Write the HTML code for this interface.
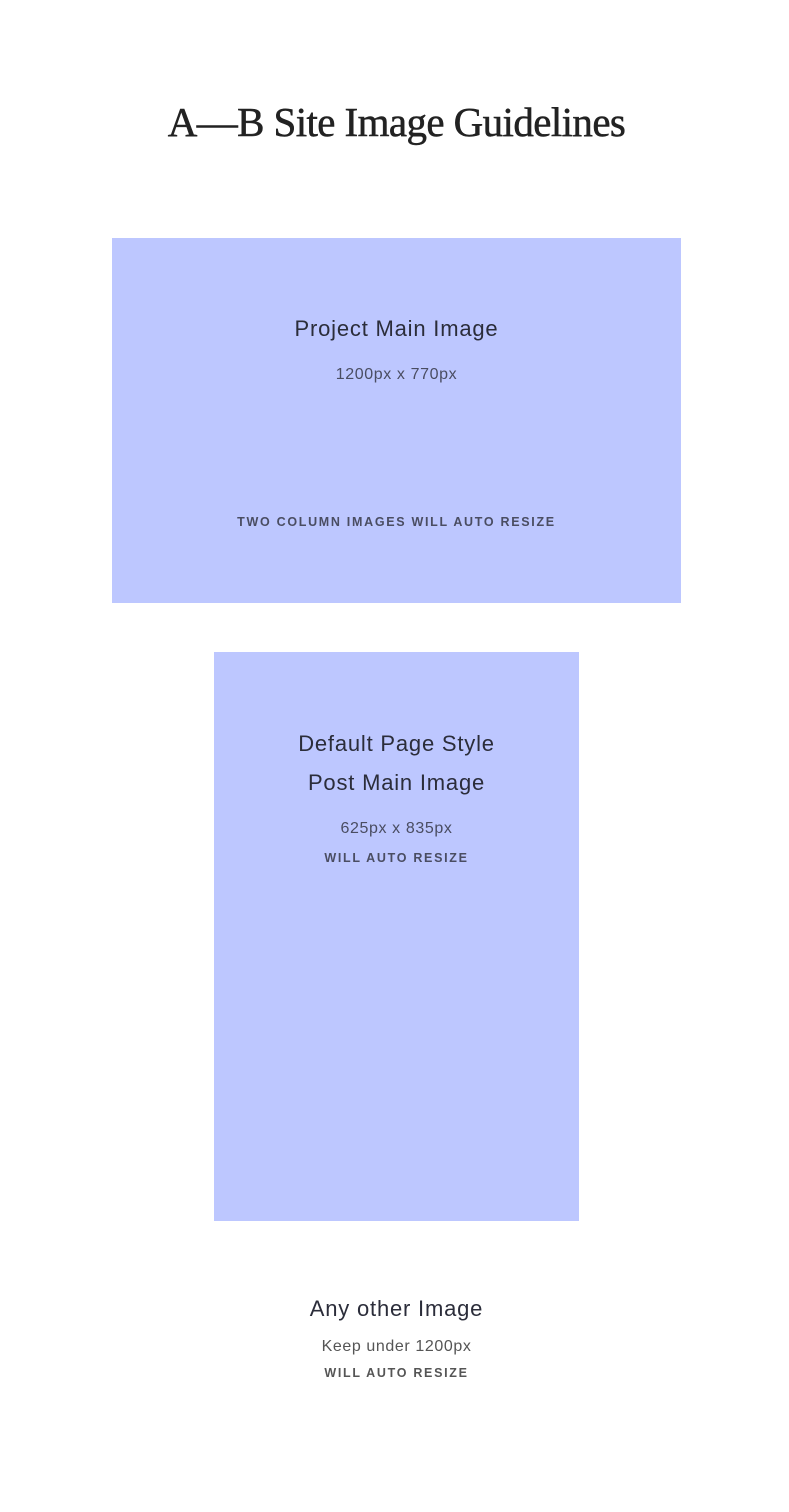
<!DOCTYPE html>
<html><head><meta charset="utf-8"><style>
body{margin:0;width:789px;height:1512px;background:#fff;position:relative;font-family:"Liberation Sans",sans-serif;color:#2b2d3a}
.a{position:absolute;left:0;width:793px;text-align:center;white-space:nowrap}
.box{position:absolute;background:#bdc7ff}
.t{font-family:"Liberation Serif",serif;font-size:41px;color:#222;letter-spacing:-0.6px;-webkit-text-stroke:0.5px #222}
.h{font-size:22px;color:#2b2d3a;letter-spacing:0.8px}
.s{font-size:16px;color:#4a4d62;letter-spacing:0.6px}
.c{font-size:12.5px;font-weight:bold;letter-spacing:1.7px;color:#4a4d62}
</style></head><body>
<div class="a t" style="top:98px">A—B Site Image Guidelines</div>
<div class="box" style="left:112px;top:238px;width:569px;height:365px"></div>
<div class="box" style="left:214px;top:652px;width:365px;height:569px"></div>
<div class="a h" style="top:316px">Project Main Image</div>
<div class="a s" style="top:366px">1200px x 770px</div>
<div class="a c" style="top:515px">TWO COLUMN IMAGES WILL AUTO RESIZE</div>
<div class="a h" style="top:731px">Default Page Style</div>
<div class="a h" style="top:770px">Post Main Image</div>
<div class="a s" style="top:820px">625px x 835px</div>
<div class="a c" style="top:851px">WILL AUTO RESIZE</div>
<div class="a h" style="top:1296px">Any other Image</div>
<div class="a s" style="top:1338px;color:#555">Keep under 1200px</div>
<div class="a c" style="top:1366px;color:#555">WILL AUTO RESIZE</div>
</body></html>
